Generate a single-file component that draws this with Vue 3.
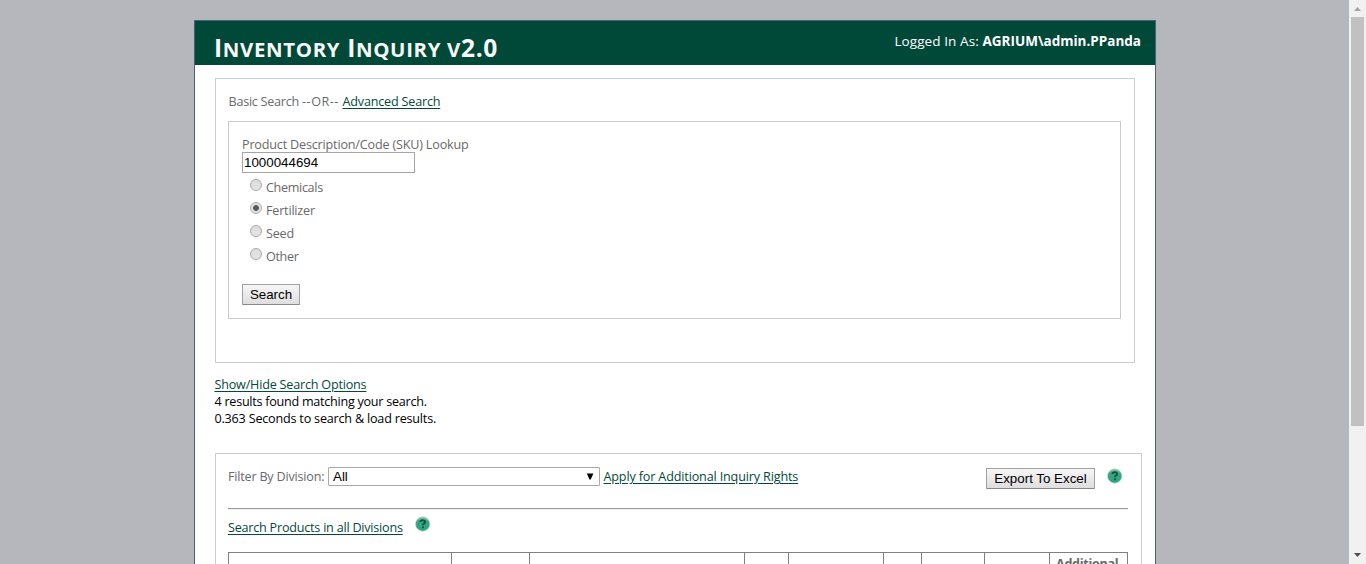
<script setup>
import { ref } from 'vue'

const sku = ref('1000044694')
const category = ref('Fertilizer')
const categories = [
  { name: 'Chemicals', cls: 'tight' },
  { name: 'Fertilizer', cls: 'normal' },
  { name: 'Seed', cls: 'normal' },
  { name: 'Other', cls: 'tight' }
]
const headings = ['', '', '', '', '', '', '', '', 'Additional']
</script>

<template>
  <div class="viewport">
    <div class="canvas">
      <main class="page">
        <header class="header">
          <h1>I<span class="small">nventory</span> I<span class="small">nquiry v</span>2.0</h1>
          <div class="login"><span class="who">Logged In As: </span><b>AGRIUM\admin.PPanda</b></div>
        </header>

        <section class="search">
          <p class="mode"><span class="basic">Basic Search </span><span class="or">--OR-- </span><a class="adv">Advanced Search</a></p>
          <div class="lookup">
            <label class="sku-label">Product Description/Code (SKU) Lookup</label>
            <input v-model="sku" class="sku" type="text" />
            <div class="radios">
              <label v-for="c in categories" :key="c.name" class="option" @click="category = c.name">
                <span class="radio" :class="{ on: category === c.name }"></span>
                <span :class="c.cls">{{ c.name }}</span>
              </label>
            </div>
            <button class="btn find">Search</button>
          </div>
        </section>

        <section class="summary">
          <div><a class="toggle">Show/Hide Search Options</a></div>
          <div><span class="count">4 results found matching your search.</span></div>
          <div><span class="time">0.363 Seconds to search &amp; load results.</span></div>
        </section>

        <section class="results">
          <div class="filter">
            <span class="filter-label">Filter By Division:</span>
            <div class="select"><span>All</span><svg width="8" height="7" viewBox="0 0 8 7"><path d="M.8 .5h6.6L4.7 6.5H3.5z" /></svg></div>
            <a class="apply">Apply for Additional Inquiry Rights</a>
            <button class="btn export">Export To Excel</button>
            <svg class="help" width="16" height="16" viewBox="0 0 16 16">
              <use href="#help-icon" />
            </svg>
          </div>
          <div class="rule"></div>
          <div class="all">
            <a class="all-link">Search Products in all Divisions</a>
            <svg class="help" width="16" height="16" viewBox="0 0 16 16">
              <defs>
                <linearGradient id="ball" x1="0" y1="0" x2="0" y2="1">
                  <stop offset="0" stop-color="#91c8b3" />
                  <stop offset=".35" stop-color="#3b9f7d" />
                  <stop offset="1" stop-color="#2ba982" />
                </linearGradient>
                <g id="help-icon">
                  <circle cx="7.7" cy="8" r="7.2" fill="url(#ball)" stroke="#b7dccf" stroke-width=".6" />
                  <path d="M5.4 6C5.5 3.5 10 3.5 10 6C10 7.6 8 7.5 8 9.3M8 10.6V12.3" fill="none" stroke="#07553f" stroke-width="1.9" />
                </g>
              </defs>
              <use href="#help-icon" />
            </svg>
          </div>
          <div class="grid">
            <div v-for="(h, i) in headings" :key="i" class="cell"><span>{{ h }}</span></div>
          </div>
        </section>
      </main>
    </div>
    <aside class="scrollbar">
      <svg class="arrow" width="17" height="17" viewBox="0 0 17 17"><path d="M5 11L8.5 7L12 11z" fill="#a3a3a3" /></svg>
      <div class="thumb"></div>
      <svg class="arrow" width="17" height="17" viewBox="0 0 17 17"><path d="M5 6L8.5 10L12 6z" fill="#505050" /></svg>
    </aside>
  </div>
</template>

<style>
body { overflow: hidden; }
</style>

<style scoped>
.viewport { display: flex; height: 564px; overflow: hidden; font: 12.6px/17px "Open Sans", "Noto Sans", sans-serif; letter-spacing: -.2px; color: #696969; background: #b6b7bc; }
.viewport * { box-sizing: border-box; }
.canvas { width: 1349px; height: 564px; overflow: hidden; }
.page { width: 962px; height: 700px; margin: 20px 0 0 194px; background: #fff; border: 1px solid #496077; }
span, a, b { white-space: pre; }
a { color: #034a3a; text-decoration: underline; text-underline-offset: 2px; cursor: pointer; }
.header { display: flex; justify-content: space-between; height: 44px; padding: 0 14px 0 19px; background: #004838; color: #f9f9f9; }
h1 { margin: 12px 0 0; font-size: 24.6px; line-height: 30px; font-weight: 700; letter-spacing: .65px; white-space: nowrap; }
.small { font-size: .83em; text-transform: uppercase; }
.login { margin-top: 12px; font-size: 13.5px; letter-spacing: 0; color: #fff; }
.who { letter-spacing: .1px; }
.search { width: 920px; height: 285px; margin: 13px 0 0 20px; padding: 14px 12px 0; border: 1px solid #ccc; }
.mode { margin: 0 0 0 .5px; height: 28px; }
.basic { letter-spacing: -.25px; }
.or { letter-spacing: .5px; }
.lookup { width: 893px; height: 198px; padding: 14px 13px 0; border: 1px solid #ccc; }
.sku-label { display: block; height: 16px; white-space: nowrap; letter-spacing: -.18px; }
.sku { display: block; width: 173px; height: 21px; margin: 0; padding: 1px 2px 2px 1px; border: 1px solid #a5a5a5; outline: 0; font: 13.333px "Liberation Sans", sans-serif; letter-spacing: 0; color: #000; }
.radios { padding: 3px 0 0 8px; height: 111px; }
.option { display: flex; height: 23px; padding-top: 3px; gap: 4px; }
.tight { letter-spacing: -.33px; }
.radio { width: 12px; height: 12px; border: 1px solid #aaa; border-radius: 50%; background: linear-gradient(#dcdcdc, #e5e5e5); flex: none; }
.radio.on { background: radial-gradient(circle, #575757 0 2.5px, #e2e2e2 3.3px); }
.btn { display: flex; align-items: center; justify-content: center; height: 21px; padding: 0; border: 1px solid #a0a0a0; border-bottom-color: #888; border-radius: 1px; background: linear-gradient(#f6f6f6, #dedede); font: 13.333px/15px "Liberation Sans", sans-serif; letter-spacing: 0; color: #000; }
.find { width: 58px; }
.summary { margin: 13px 0 0 19.5px; height: 77px; color: #000; }
.count { letter-spacing: -.26px; }
.results { width: 927px; height: 300px; margin-left: 20px; padding: 12px 12px 0; border: 1px solid #ccc; }
.filter { display: flex; height: 42px; width: 900px; }
.filter-label { width: 100px; padding-top: 2px; }
.select { display: flex; justify-content: space-between; width: 272px; height: 19px; margin-top: 1px; padding: 0 5px 0 4px; border: 1px solid #a9a9a9; border-radius: 1px; color: #000; font: 13.333px/17px "Liberation Sans", sans-serif; letter-spacing: 0; }
.select svg { margin-top: 5px; }
.apply { margin: 2px 0 0 3.5px; letter-spacing: -.15px; }
.export { width: 109px; margin: 2px 12px 0 auto; }
.filter .help { margin: 2px 5px 0 0; flex: none; }
.rule { width: 900px; height: 2px; border-top: 1px solid #9a9a9a; border-bottom: 1px solid #eee; }
.all { display: flex; height: 42px; }
.all-link { width: 175px; margin-top: 9px; letter-spacing: -.22px; }
.all .help { margin: 6px 0 0 12px; }
.grid { display: grid; grid-template-columns: 223px 78px 215px 44px 95px 38px 63px 65px 78px; width: 900px; height: 60px; border: solid #808080; border-width: 1px 0 0 1px; }
.cell { padding: 2px 0 0 6px; border-right: 1px solid #808080; font-weight: 700; letter-spacing: -.3px; }
.scrollbar { width: 17px; height: 564px; display: flex; flex-direction: column; background: #f1f1f1; }
.arrow { display: block; flex: none; }
.thumb { width: 13px; height: 409px; margin: 0 0 121px 2px; background: #c1c1c1; flex: none; }
</style>
